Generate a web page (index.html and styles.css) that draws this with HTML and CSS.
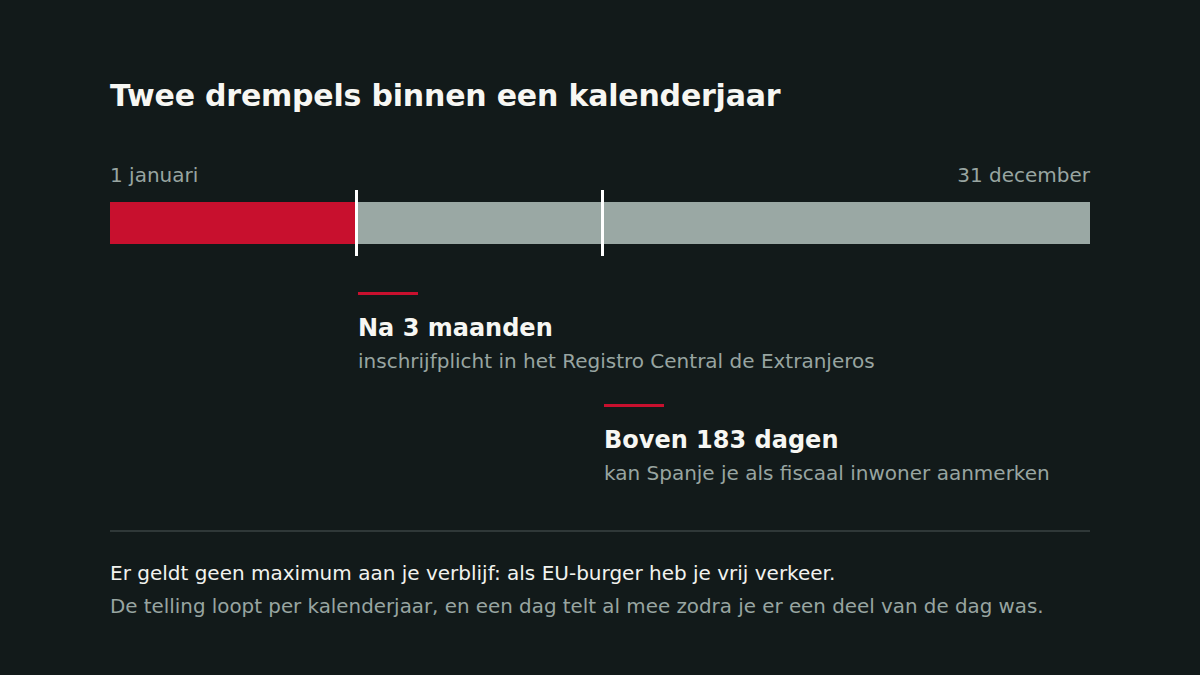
FILE: index.html
```html
<!DOCTYPE html>
<html lang="nl">
<head>
<meta charset="utf-8">
<title>Twee drempels binnen een kalenderjaar</title>
<link rel="stylesheet" href="styles.css">
</head>
<body>
<main class="page">
  <h1 class="title">Twee drempels binnen een kalenderjaar</h1>
  <div class="labels">
    <span>1 januari</span>
    <span>31 december</span>
  </div>
  <div class="track">
    <div class="bar">
      <div class="fill"></div>
    </div>
    <div class="tick tick-1"></div>
    <div class="tick tick-2"></div>
  </div>
  <div class="annotation annotation-1">
    <div class="accent"></div>
    <h2 class="annot-title">Na 3 maanden</h2>
    <p class="annot-text">inschrijfplicht in het Registro Central de Extranjeros</p>
  </div>
  <div class="annotation annotation-2">
    <div class="accent"></div>
    <h2 class="annot-title">Boven 183 dagen</h2>
    <p class="annot-text">kan Spanje je als fiscaal inwoner aanmerken</p>
  </div>
  <hr class="divider">
  <p class="note note-main">Er geldt geen maximum aan je verblijf: als EU-burger heb je vrij verkeer.</p>
  <p class="note note-sub">De telling loopt per kalenderjaar, en een dag telt al mee zodra je er een deel van de dag was.</p>
</main>
</body>
</html>
```

FILE: styles.css
```css
* { box-sizing: border-box; }

html, body {
  margin: 0;
  padding: 0;
  background: #121a1a;
}

body {
  font-family: "DejaVu Sans", "Liberation Sans", sans-serif;
  color: #f2f3ef;
  width: 1200px;
  height: 675px;
  overflow: hidden;
}

.page {
  padding: 78px 110px 0 110px;
}

.title {
  margin: 0;
  font-size: 30px;
  line-height: 36px;
  font-weight: bold;
  letter-spacing: -0.2px;
  color: #f7f7f3;
}

.labels {
  display: flex;
  justify-content: space-between;
  margin-top: 49px;
  font-size: 20px;
  line-height: 24px;
  color: #98a5a1;
}

.track {
  position: relative;
  margin-top: 3px;
  height: 66px;
  padding: 12px 0;
}

.bar {
  height: 42px;
  background: #9aa8a4;
}

.fill {
  width: 25%;
  height: 100%;
  background: #c8102e;
}

.tick {
  position: absolute;
  top: 0;
  width: 3px;
  height: 66px;
  background: #ffffff;
}

.tick-1 { left: 25%; }
.tick-2 { left: 50.1%; }

.annotation-1 {
  margin-top: 36px;
  margin-left: calc(25% + 3px);
}

.annotation-2 {
  margin-top: 31px;
  margin-left: calc(50.1% + 3px);
}

.accent {
  width: 60px;
  height: 3px;
  background: #c8102e;
}

.annot-title {
  margin: 19px 0 0 0;
  font-size: 24px;
  line-height: 28px;
  font-weight: bold;
  color: #f7f7f3;
}

.annot-text {
  margin: 7px 0 0 0;
  font-size: 20px;
  line-height: 24px;
  color: #98a5a1;
}

.divider {
  margin: 45px 0 0 0;
  border: 0;
  height: 2px;
  background: #2f3838;
}

.note {
  margin: 0;
  font-size: 20px;
  line-height: 24px;
}

.note-main {
  margin-top: 29px;
  color: #f2f3ef;
}

.note-sub {
  margin-top: 10px;
  font-size: 19.85px;
  color: #98a5a1;
}
```
